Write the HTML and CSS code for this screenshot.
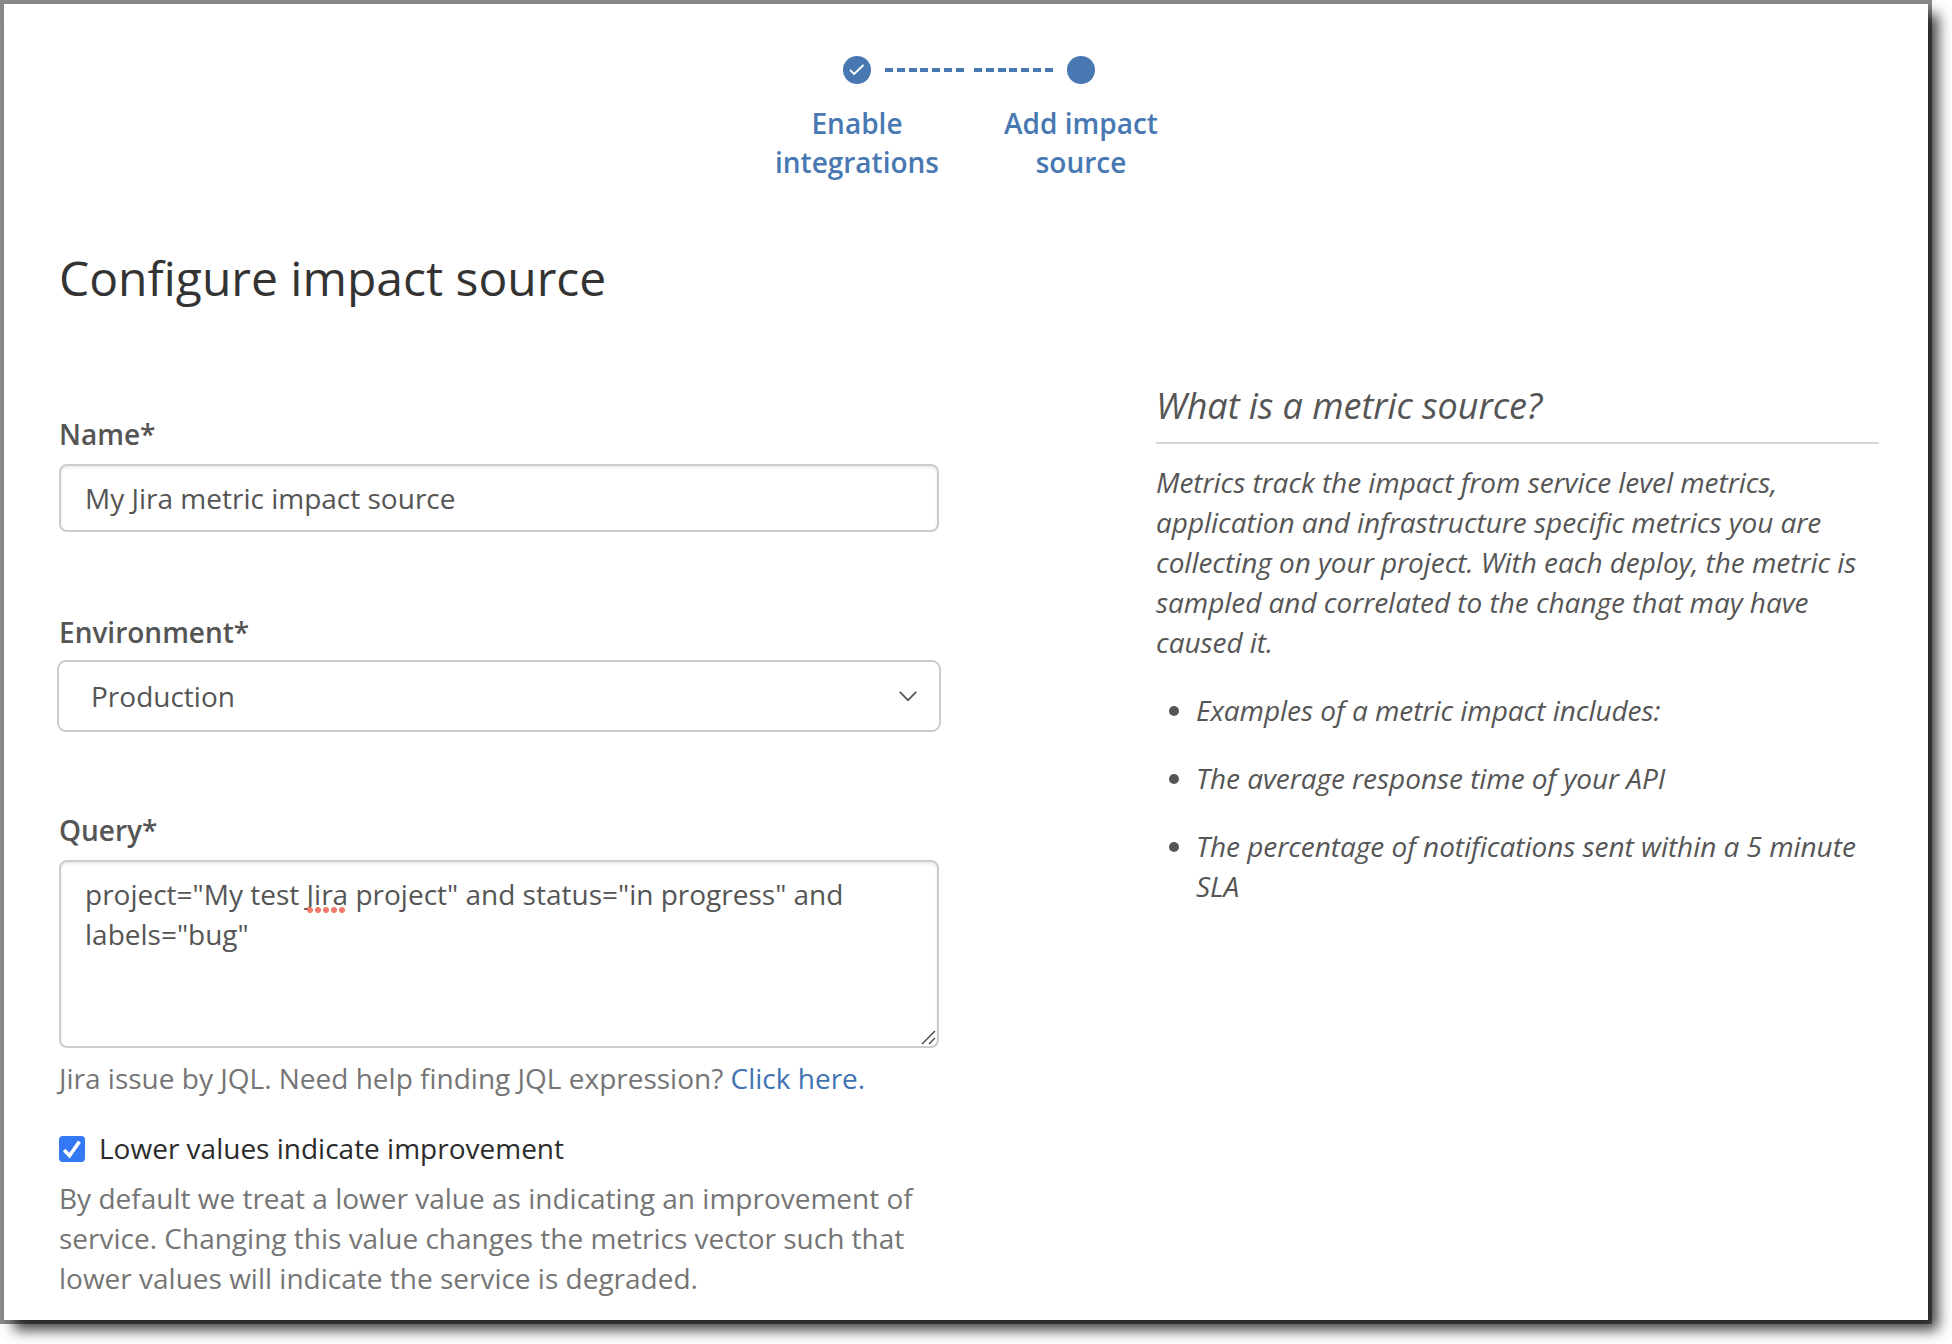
FILE: index.html
```html
<!DOCTYPE html>
<html lang="en">
<head>
<meta charset="utf-8">
<title>Configure impact source</title>
<link rel="stylesheet" href="styles.css">
</head>
<body>
<main class="window">
  <nav class="steps">
    <div class="step">
      <div class="track"><span class="dot"><svg width="16" height="12" viewBox="0 0 16 12"><path d="M1 6l4.2 4L14.5 1" fill="none" stroke="#fff" stroke-width="1.8"/></svg></span><span class="dash dash-after"></span></div>
      <div class="step-label">Enable<br>integrations</div>
    </div>
    <div class="step">
      <div class="track"><span class="dash dash-before"></span><span class="dot"></span></div>
      <div class="step-label">Add impact<br>source</div>
    </div>
  </nav>
  <h1 class="title">Configure impact source</h1>
  <div class="columns">
    <form class="form">
      <div class="field">
        <label class="label" for="name">Name*</label>
        <input class="control input" id="name" type="text" value="My Jira metric impact source">
      </div>
      <div class="field field-select">
        <span class="label">Environment*</span>
        <div class="select"><span>Production</span><svg width="18" height="11" viewBox="0 0 18 11"><path d="M.8.9L9 9.2 17.2.9" fill="none" stroke="#555" stroke-width="1.7"/></svg></div>
      </div>
      <div class="field field-query">
        <span class="label">Query*</span>
        <div class="control textarea">project="My test <span class="misspelled">Jira</span> project" and status="in progress" and labels="bug"<svg class="grip" width="15" height="15" viewBox="0 0 15 15"><path d="M1 14L14 1M8 14l6-6" fill="none" stroke="#444" stroke-width="1.4"/></svg></div>
      </div>
      <p class="help">Jira issue by JQL. Need help finding JQL expression? <a class="link" href="#">Click here.</a></p>
      <div class="check-row">
        <span class="checkbox"><svg width="20" height="20" viewBox="0 0 20 20"><path d="M2.2 11l5.3 5.7L17.4 2.6" fill="none" stroke="#fff" stroke-width="3.6"/></svg></span>
        <span>Lower values indicate improvement</span>
      </div>
      <p class="description">By default we treat a lower value as indicating an improvement of service. Changing this value changes the metrics vector such that lower values will indicate the service is degraded.</p>
    </form>
    <aside class="info">
      <h2 class="info-title">What is a metric source?</h2>
      <p class="info-text">Metrics track the impact from service level metrics, application and infrastructure specific metrics you are collecting on your project. With each deploy, the metric is sampled and correlated to the change that may have caused it.</p>
      <ul class="info-list">
        <li>Examples of a metric impact includes:</li>
        <li>The average response time of your API</li>
        <li>The percentage of notifications sent within a 5 minute SLA</li>
      </ul>
    </aside>
  </div>
</main>
</body>
</html>
```
FILE: styles.css
```css
* { box-sizing: border-box; }
body {
  margin: 0;
  height: 1344px;
  padding: 4px;
  overflow: hidden;
  background: #fff;
  color: #555;
  font: 28px/40px "Open Sans", sans-serif;
}
h1, h2, p, ul { margin: 0; padding: 0; }
.window {
  width: 1924px;
  height: 1316px;
  padding: 52px 49px 0 55px;
  background: #fff;
  box-shadow: 0 0 0 4px rgba(0, 0, 0, .46), 10px 10px 13px rgba(0, 0, 0, .76);
}
.steps {
  display: flex;
  width: 448px;
  margin-left: 686px;
  color: #4878b1;
}
.step { width: 224px; }
.track {
  display: grid;
  grid-template-columns: 1fr 28px 1fr;
  align-items: center;
  height: 28px;
}
.dot {
  grid-column: 2;
  grid-row: 1;
  display: flex;
  align-items: center;
  justify-content: center;
  width: 28px;
  height: 28px;
  border-radius: 50%;
  background: #4878b1;
}
.dash {
  grid-row: 1;
  width: 79px;
  height: 4px;
  background: repeating-linear-gradient(90deg, #4878b1 0 8px, transparent 8px 11.83px);
}
.dash-after { grid-column: 3; margin-left: 14px; }
.dash-before { grid-column: 1; margin-left: 5px; }
.step-label {
  margin-top: 20px;
  text-align: center;
  font-weight: 600;
  line-height: 39px;
}
.title {
  margin-top: 66px;
  font-size: 48px;
  line-height: 60px;
  font-weight: 400;
  color: #333;
}
.columns {
  display: grid;
  grid-template-columns: 880px 723px;
  justify-content: space-between;
}
.form { padding-top: 106px; }
.label { display: block; font-weight: 600; }
.control {
  display: block;
  width: 100%;
  border: 2px solid #ccc;
  border-radius: 8px;
  background: #fff;
  box-shadow: inset 0 2px 3px rgba(0, 0, 0, .08);
  color: #555;
  font: inherit;
}
.input { height: 68px; margin-top: 10px; padding: 0 24px; }
.field-select { margin-top: 80px; }
.select {
  display: flex;
  align-items: center;
  justify-content: space-between;
  height: 72px;
  margin: 8px -2px 0;
  padding: 0 22px 0 32px;
  border: 2px solid #ccc;
  border-radius: 9px;
}
.field-query { margin-top: 78px; }
.textarea {
  position: relative;
  height: 188px;
  margin-top: 10px;
  padding: 12px 24px;
}
.misspelled { position: relative; }
.misspelled::after {
  content: "";
  position: absolute;
  left: -1px;
  bottom: 0;
  width: 40px;
  height: 6px;
  background: radial-gradient(circle, #f37a6d 2.7px, transparent 3.2px) 0 0 / 8px 6px;
}
.grip { position: absolute; right: 1px; bottom: 1px; }
.help { margin-top: 10px; color: #757575; }
.link { color: #3f73b3; text-decoration: none; }
.check-row {
  display: flex;
  align-items: center;
  gap: 14px;
  margin-top: 30px;
  color: #2b2b2b;
}
.checkbox {
  display: flex;
  align-items: center;
  justify-content: center;
  width: 26px;
  height: 26px;
  margin-top: 1px;
  border-radius: 4px;
  background: #3478f6;
}
.description { margin-top: 10px; color: #757575; }
.info { padding-top: 73px; font-style: italic; letter-spacing: -.045px; }
.info-title {
  height: 63px;
  border-bottom: 2px solid #d6d6d6;
  font-size: 36px;
  line-height: 50px;
  font-weight: 400;
}
.info-text { margin-top: 18px; }
.info-list { margin-top: 28px; padding-left: 40px; list-style: none; }
.info-list li { position: relative; margin-bottom: 28px; }
.info-list li::before {
  content: "";
  position: absolute;
  left: -27px;
  top: 16px;
  width: 10px;
  height: 10px;
  border-radius: 50%;
  background: #555;
}
```
